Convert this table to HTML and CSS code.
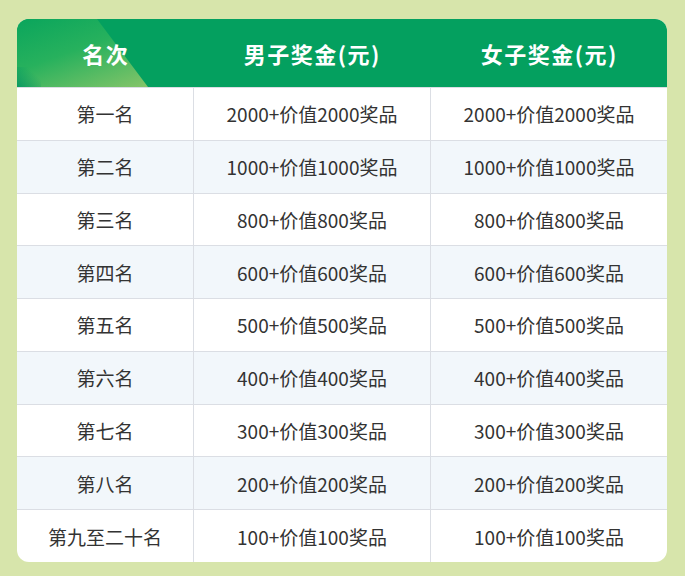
FILE: index.html
```html
<!DOCTYPE html>
<html lang="zh">
<head>
<meta charset="utf-8">
<link rel="stylesheet" href="styles.css">
</head>
<body>
<div class="card">
  <div class="head">
    <div class="hcell">名次</div>
    <div class="hcell">男子奖金(元)</div>
    <div class="hcell">女子奖金(元)</div>
  </div>
  <div class="row"><div class="cell">第一名</div><div class="cell">2000+价值2000奖品</div><div class="cell">2000+价值2000奖品</div></div>
  <div class="row alt"><div class="cell">第二名</div><div class="cell">1000+价值1000奖品</div><div class="cell">1000+价值1000奖品</div></div>
  <div class="row"><div class="cell">第三名</div><div class="cell">800+价值800奖品</div><div class="cell">800+价值800奖品</div></div>
  <div class="row alt"><div class="cell">第四名</div><div class="cell">600+价值600奖品</div><div class="cell">600+价值600奖品</div></div>
  <div class="row"><div class="cell">第五名</div><div class="cell">500+价值500奖品</div><div class="cell">500+价值500奖品</div></div>
  <div class="row alt"><div class="cell">第六名</div><div class="cell">400+价值400奖品</div><div class="cell">400+价值400奖品</div></div>
  <div class="row"><div class="cell">第七名</div><div class="cell">300+价值300奖品</div><div class="cell">300+价值300奖品</div></div>
  <div class="row alt"><div class="cell">第八名</div><div class="cell">200+价值200奖品</div><div class="cell">200+价值200奖品</div></div>
  <div class="row"><div class="cell">第九至二十名</div><div class="cell">100+价值100奖品</div><div class="cell">100+价值100奖品</div></div>
</div>
</body>
</html>
```
FILE: styles.css
```css
html, body {
  margin: 0;
  padding: 0;
  background: #d7e5ab;
  width: 685px;
  height: 576px;
  overflow: hidden;
}
body {
  padding: 19px 18px 0 17px;
  box-sizing: border-box;
  font-family: "Noto Sans CJK SC", "Noto Sans", sans-serif;
}
.card {
  width: 650px;
  height: 543px;
  background: #ffffff;
  border-radius: 12px;
  overflow: hidden;
  display: grid;
  grid-template-rows: 68px repeat(9, 1fr);
}
.head, .row {
  display: grid;
  grid-template-columns: 176px 237px 237px;
}
.head {
  position: relative;
  background: #04a05f;
  color: #ffffff;
  font-weight: 700;
  font-size: 22px;
  letter-spacing: 1.5px;
}
.head::before {
  content: "";
  position: absolute;
  left: 0;
  top: 0;
  width: 132px;
  height: 68px;
  background: linear-gradient(160deg, #0aa55c 0%, #27b15d 45%, #86c569 100%);
  clip-path: polygon(0 0, 80px 0, 131px 68px, 0 68px);
}
.head::after {
  content: "";
  position: absolute;
  left: 0;
  bottom: 0;
  width: 24px;
  height: 20px;
  background: linear-gradient(45deg, #0a9a62 0%, rgba(10,154,98,0) 70%);
}
.hcell {
  position: relative;
  z-index: 1;
  display: flex;
  align-items: center;
  justify-content: center;
  padding-left: 1.5px;
}
.row {
  border-top: 1px solid #dbdee4;
  color: #333333;
  font-size: 19px;
}
.row.alt {
  background: #f2f7fb;
}
.cell {
  display: flex;
  align-items: center;
  justify-content: center;
}
.cell + .cell {
  border-left: 1px solid #dbdee4;
}
```
